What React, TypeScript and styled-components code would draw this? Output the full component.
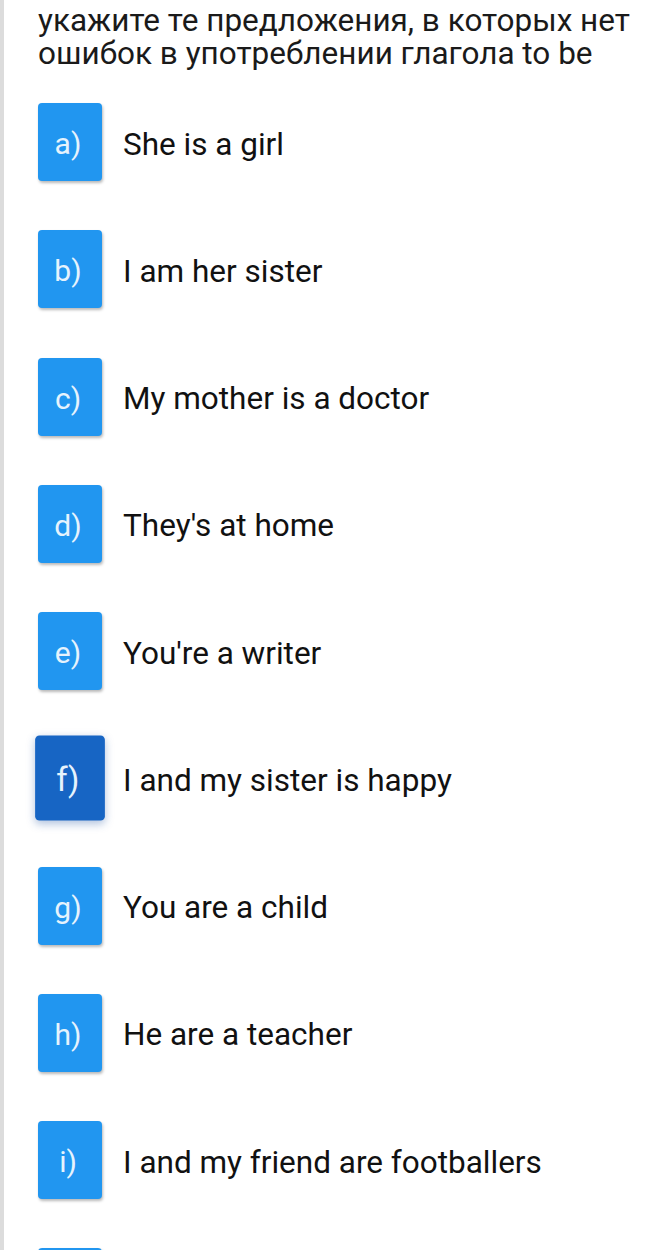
import React from "react";
import styled, { createGlobalStyle } from "styled-components";

const Global = createGlobalStyle`
  html, body { margin: 0; padding: 0; background: #ffffff; }
  body { font-family: Roboto, "Noto Sans", Arial, sans-serif; }
`;

const Page = styled.div`
  width: 664px;
  height: 1250px;
  overflow: hidden;
  box-sizing: border-box;
  border-left: 4px solid #dcdcdc;
  padding: 4px 0 0 34px;
  background: #fff;
`;

const Question = styled.h1`
  margin: 0;
  font-family: Roboto, "Noto Sans", Arial, sans-serif;
  font-weight: 400;
  font-size: 31.5px;
  line-height: 33px;
  color: #1a1a1a;
  width: 620px;
`;

const List = styled.div`
  display: flex;
  flex-direction: column;
  gap: 49.25px;
  margin-top: 33px;
`;

const Row = styled.div`
  display: flex;
  align-items: center;
  gap: 21px;
`;

const Badge = styled.div<{ $active?: boolean }>`
  width: 64px;
  height: 78px;
  flex: none;
  border-radius: 4px;
  display: flex;
  align-items: center;
  justify-content: center;
  background: ${(p) => (p.$active ? "#1765c4" : "#2196f0")};
  color: #e6f3fd;
  font-size: 30px;
  font-family: Roboto, "Noto Sans", Arial, sans-serif;
  padding: 3px 4px 0 0;
  box-sizing: border-box;
  box-shadow: ${(p) =>
    p.$active
      ? "0 3px 8px rgba(30, 80, 160, 0.35)"
      : "1px 2px 3px rgba(0, 0, 0, 0.28)"};
  transform: ${(p) => (p.$active ? "scale(1.09)" : "none")};
`;

const Answer = styled.span`
  font-size: 31.5px;
  color: #111;
  font-family: Roboto, "Noto Sans", Arial, sans-serif;
  padding-top: 4px;
`;

const items: [string, string][] = [
  ["a)", "She is a girl"],
  ["b)", "I am her sister"],
  ["c)", "My mother is a doctor"],
  ["d)", "They's at home"],
  ["e)", "You're a writer"],
  ["f)", "I and my sister is happy"],
  ["g)", "You are a child"],
  ["h)", "He are a teacher"],
  ["i)", "I and my friend are footballers"],
];

export default function App() {
  return (
    <>
      <Global />
      <Page>
        <Question>
          укажите те предложения, в которых нет ошибок в употреблении глагола to be
        </Question>
        <List>
          {items.map(([label, text]) => (
            <Row key={label}>
              <Badge $active={label === "f)"}>{label}</Badge>
              <Answer>{text}</Answer>
            </Row>
          ))}
          <Row>
            <Badge aria-hidden="true" />
          </Row>
        </List>
      </Page>
    </>
  );
}
